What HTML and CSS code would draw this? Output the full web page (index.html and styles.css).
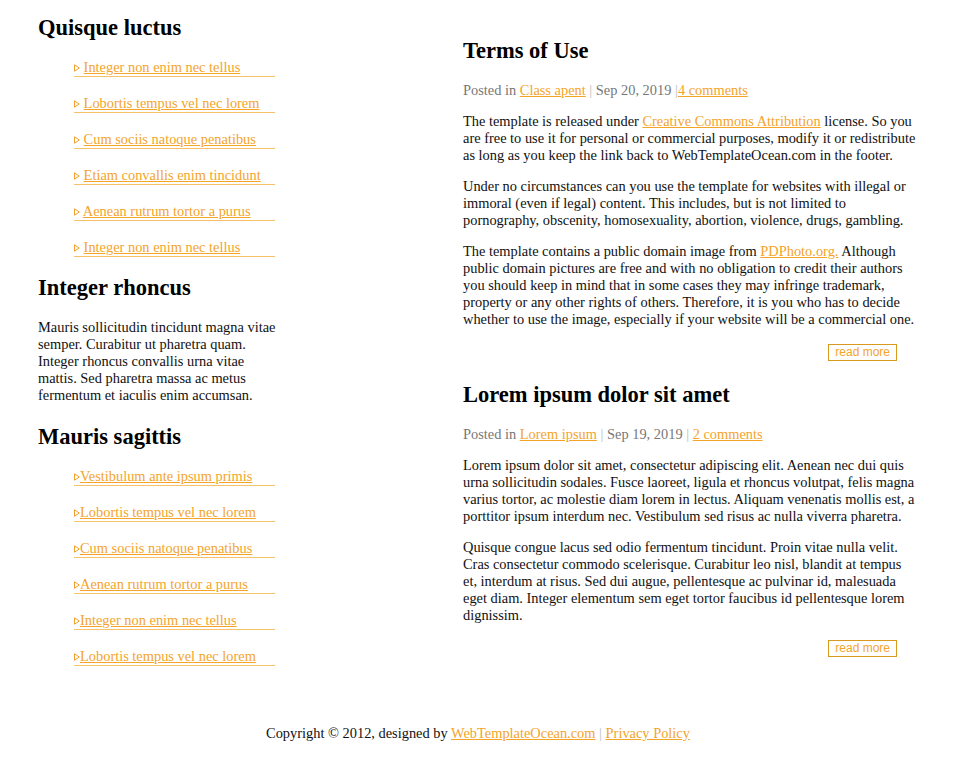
FILE: index.html
```html
<!DOCTYPE html>
<html lang="en">
<head>
<meta charset="utf-8">
<title>Terms of Use</title>
<link rel="stylesheet" href="styles.css">
</head>
<body>
<div class="wrapper">
  <div class="columns">
    <aside class="sidebar">
      <h2>Quisque luctus</h2>
      <ul class="links">
        <li><svg class="tri" viewBox="0 0 6 8"><path d="M0.5 0.8 L5.3 4 L0.5 7.2 Z"/></svg> <a href="#">Integer non enim nec tellus</a></li>
        <li><svg class="tri" viewBox="0 0 6 8"><path d="M0.5 0.8 L5.3 4 L0.5 7.2 Z"/></svg> <a href="#">Lobortis tempus vel nec lorem</a></li>
        <li><svg class="tri" viewBox="0 0 6 8"><path d="M0.5 0.8 L5.3 4 L0.5 7.2 Z"/></svg> <a href="#">Cum sociis natoque penatibus</a></li>
        <li><svg class="tri" viewBox="0 0 6 8"><path d="M0.5 0.8 L5.3 4 L0.5 7.2 Z"/></svg> <a href="#">Etiam convallis enim tincidunt</a></li>
        <li><svg class="tri" viewBox="0 0 6 8"><path d="M0.5 0.8 L5.3 4 L0.5 7.2 Z"/></svg> <a href="#">Aenean rutrum tortor a purus</a></li>
        <li><svg class="tri" viewBox="0 0 6 8"><path d="M0.5 0.8 L5.3 4 L0.5 7.2 Z"/></svg> <a href="#">Integer non enim nec tellus</a></li>
      </ul>
      <h2>Integer rhoncus</h2>
      <p>Mauris sollicitudin tincidunt magna vitae semper. Curabitur ut pharetra quam. Integer rhoncus convallis urna vitae mattis. Sed pharetra massa ac metus fermentum et iaculis enim accumsan.</p>
      <h2>Mauris sagittis</h2>
      <ul class="links">
        <li><svg class="tri" viewBox="0 0 6 8"><path d="M0.5 0.8 L5.3 4 L0.5 7.2 Z"/></svg><a href="#">Vestibulum ante ipsum primis</a></li>
        <li><svg class="tri" viewBox="0 0 6 8"><path d="M0.5 0.8 L5.3 4 L0.5 7.2 Z"/></svg><a href="#">Lobortis tempus vel nec lorem</a></li>
        <li><svg class="tri" viewBox="0 0 6 8"><path d="M0.5 0.8 L5.3 4 L0.5 7.2 Z"/></svg><a href="#">Cum sociis natoque penatibus</a></li>
        <li><svg class="tri" viewBox="0 0 6 8"><path d="M0.5 0.8 L5.3 4 L0.5 7.2 Z"/></svg><a href="#">Aenean rutrum tortor a purus</a></li>
        <li><svg class="tri" viewBox="0 0 6 8"><path d="M0.5 0.8 L5.3 4 L0.5 7.2 Z"/></svg><a href="#">Integer non enim nec tellus</a></li>
        <li><svg class="tri" viewBox="0 0 6 8"><path d="M0.5 0.8 L5.3 4 L0.5 7.2 Z"/></svg><a href="#">Lobortis tempus vel nec lorem</a></li>
      </ul>
    </aside>
    <main class="content">
      <article class="post">
        <h2>Terms of Use</h2>
        <p class="meta">Posted in <a href="#">Class apent</a> <span class="sep">|</span> Sep 20, 2019 <span class="sep">|</span><a href="#">4 comments</a></p>
        <p>The template is released under <a href="#">Creative Commons Attribution</a> license. So you are free to use it for personal or commercial purposes, modify it or redistribute as long as you keep the link back to WebTemplateOcean.com in the footer.</p>
        <p>Under no circumstances can you use the template for websites with illegal or immoral (even if legal) content. This includes, but is not limited to pornography, obscenity, homosexuality, abortion, violence, drugs, gambling.</p>
        <p>The template contains a public domain image from <a href="#">PDPhoto.org.</a> Although public domain pictures are free and with no obligation to credit their authors you should keep in mind that in some cases they may infringe trademark, property or any other rights of others. Therefore, it is you who has to decide whether to use the image, especially if your website will be a commercial one.</p>
        <div class="more-row"><a class="more" href="#">read more</a></div>
      </article>
      <article class="post">
        <h2>Lorem ipsum dolor sit amet</h2>
        <p class="meta">Posted in <a href="#">Lorem ipsum</a> <span class="sep">|</span> Sep 19, 2019 <span class="sep">|</span> <a href="#">2 comments</a></p>
        <p>Lorem ipsum dolor sit amet, consectetur adipiscing elit. Aenean nec dui quis urna sollicitudin sodales. Fusce laoreet, ligula et rhoncus volutpat, felis magna varius tortor, ac molestie diam lorem in lectus. Aliquam venenatis mollis est, a porttitor ipsum interdum nec. Vestibulum sed risus ac nulla viverra pharetra.</p>
        <p>Quisque congue lacus sed odio fermentum tincidunt. Proin vitae nulla velit. Cras consectetur commodo scelerisque. Curabitur leo nisl, blandit at tempus et, interdum at risus. Sed dui augue, pellentesque ac pulvinar id, malesuada eget diam. Integer elementum sem eget tortor faucibus id pellentesque lorem dignissim.</p>
        <div class="more-row"><a class="more" href="#">read more</a></div>
      </article>
    </main>
  </div>
  <footer class="footer">Copyright © 2012, designed by <a href="#">WebTemplateOcean.com</a> <span class="sep">|</span> <a href="#">Privacy Policy</a></footer>
</div>
</body>
</html>
```

FILE: styles.css
```css
html, body {
  margin: 0;
  padding: 0;
  background: #fff;
}

body {
  font-family: "Liberation Serif", "Times New Roman", serif;
  font-size: 14.4px;
  line-height: 17px;
  color: #111;
}

a {
  color: #f5a42a;
  text-decoration: underline;
}

.wrapper {
  width: 880px;
  margin-left: 38px;
}

.columns {
  display: grid;
  grid-template-columns: 241px 455px;
  column-gap: 184px;
  align-items: start;
}

h2 {
  font-size: 22.5px;
  line-height: 25px;
  font-weight: bold;
  color: #000;
  margin: 0 0 19px;
}

p {
  margin: 0 0 14px;
}

.sidebar {
  padding-top: 15px;
}

.sidebar p {
  margin-bottom: 20px;
}

.links {
  list-style: none;
  margin: 0 4px 1px 0;
  padding: 0 0 0 36px;
}

.links li {
  border-bottom: 1px solid #f5c16a;
  margin-bottom: 18px;
  line-height: 17px;
}

.tri {
  width: 6px;
  height: 8px;
  vertical-align: 0;
  fill: none;
  stroke: #f0a030;
  stroke-width: 1;
}

.content {
  padding-top: 38px;
}

.post {
  margin-bottom: 21px;
}

.meta {
  color: #777;
}

.meta .sep, .footer .sep {
  color: #bbb;
}

.more-row {
  display: flex;
  justify-content: flex-end;
  padding-right: 21px;
  padding-top: 2px;
}

.more {
  display: block;
  font-family: "Liberation Sans", Arial, sans-serif;
  font-size: 12px;
  line-height: 14px;
  padding: 0 6px 1px;
  border: 1px solid #d8991f;
  color: #f5a42a;
  text-decoration: none;
}

.footer {
  text-align: center;
  padding-top: 41px;
  padding-bottom: 20px;
  color: #111;
}
```
